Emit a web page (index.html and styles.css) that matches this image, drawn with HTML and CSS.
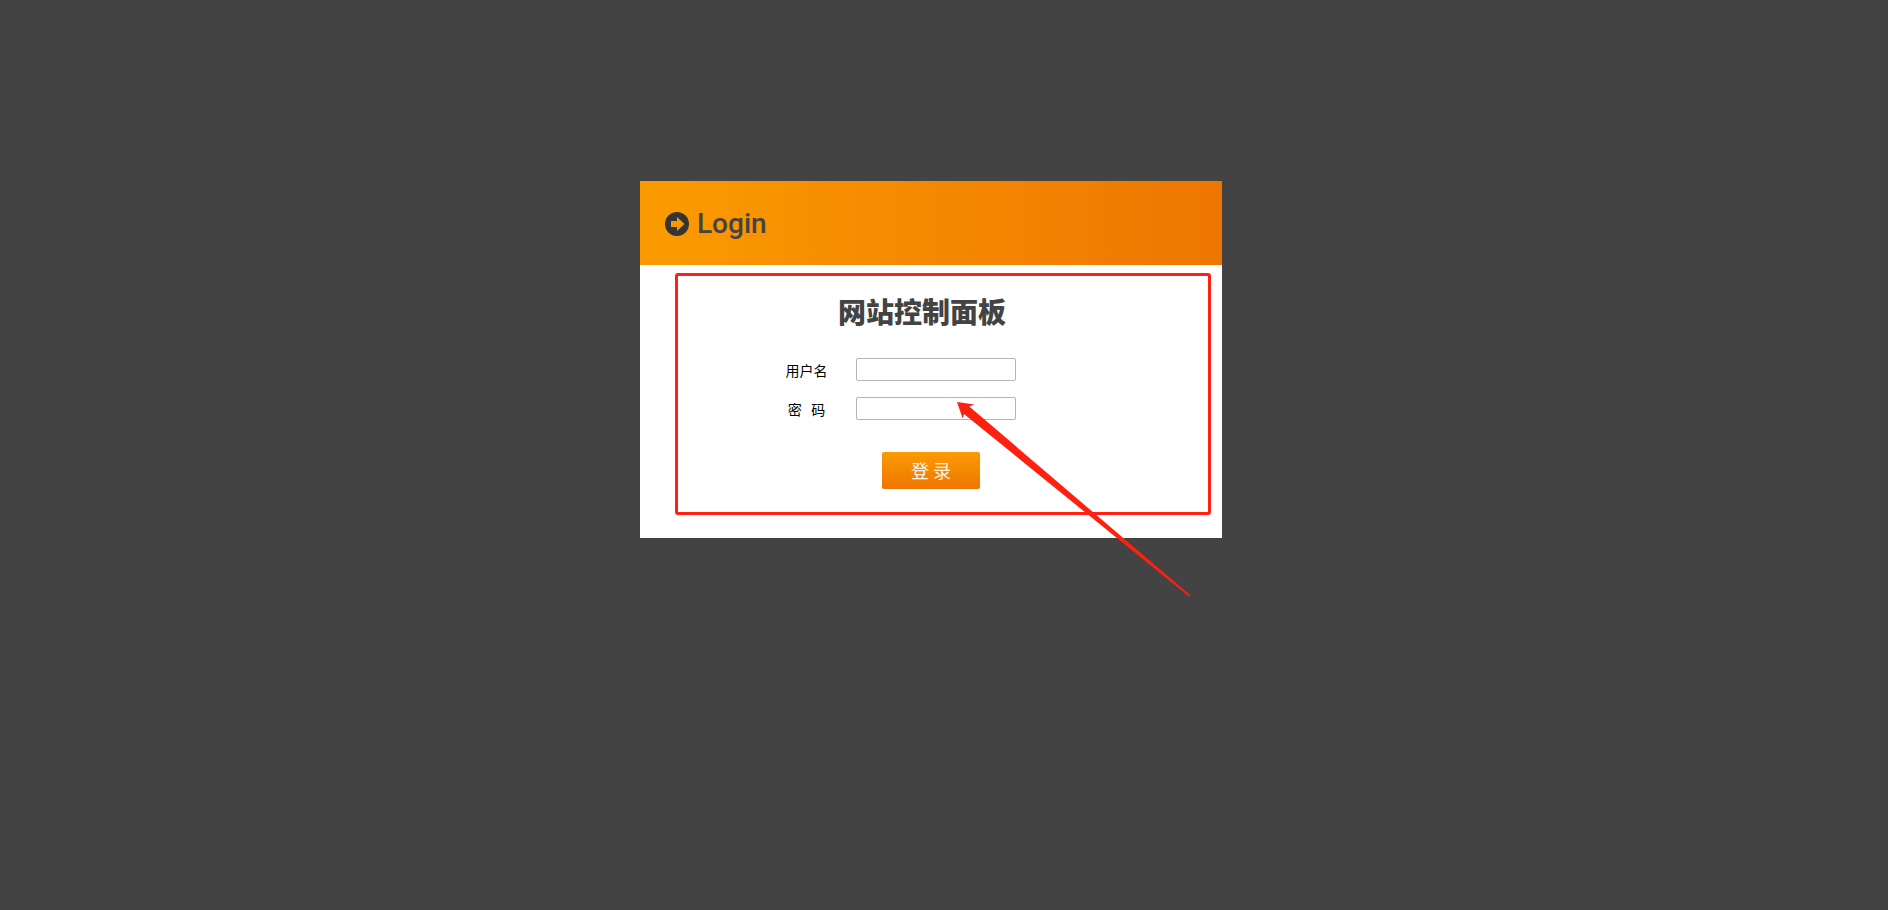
FILE: index.html
```html
<!DOCTYPE html>
<html lang="zh-CN">
<head>
<meta charset="utf-8">
<meta name="viewport" content="width=device-width, initial-scale=1">
<title>Login</title>
<link rel="stylesheet" href="styles.css">
</head>
<body>
<main class="card">
  <header class="card-header">
    <svg class="login-icon" viewBox="0 0 24 24" aria-hidden="true">
      <circle cx="12" cy="12" r="12" fill="#343434"/>
      <path d="M6 9H12V5L19.500 12 12 19V15H6Z" fill="#f99a02"/>
    </svg>
    <span class="login-label">Login</span>
  </header>
  <form class="panel">
    <h1 class="panel-title">网站控制面板</h1>
    <div class="field">
      <label class="field-label" for="username">用户名</label>
      <input class="field-input" id="username" name="username" type="text">
    </div>
    <div class="field">
      <label class="field-label" for="password">密&nbsp;&nbsp; 码</label>
      <input class="field-input" id="password" name="password" type="password">
    </div>
    <button class="submit" type="submit">登 录</button>
  </form>
  <svg class="pointer" viewBox="0 0 240 200" aria-hidden="true">
    <polygon points="0,0 17.5,2.5 12.3,4.5 233,193 232,194.5 7,12 5.7,16.5" fill="#ff2010"/>
  </svg>
</main>
</body>
</html>
```
FILE: styles.css
```css
* {
  box-sizing: border-box;
}

body {
  min-height: 100vh;
  margin: 0;
  padding: 181px 26px 80px 0;
  background: #434343;
  color: #000;
  font-family: "Noto Sans CJK SC", sans-serif;
  font-size: 14px;
}

.card {
  position: relative;
  width: 100%;
  max-width: 582px;
  margin: 0 auto;
  padding-bottom: 23px;
  background: #fff;
}

.card-header {
  display: flex;
  align-items: center;
  gap: 8px;
  padding: 27px 25px 25px;
  background: linear-gradient(to right, #fb9b00, #ee7600);
}

.login-icon {
  width: 24px;
  height: 24px;
}

.login-label {
  color: #434343;
  font-family: Roboto, sans-serif;
  font-size: 28px;
  font-weight: 500;
  line-height: 32px;
}

.panel {
  display: flex;
  flex-direction: column;
  align-items: center;
  gap: 16px;
  margin: 8px 11px 0 35px;
  padding: 17px 24px 23px 0;
  border: 3px solid #ff2010;
  border-radius: 3px;
}

.panel-title {
  margin: 0 18px 13px 0;
  color: #434343;
  font-size: 28px;
  font-weight: 900;
  line-height: 36px;
}

.field {
  display: flex;
  align-items: center;
  gap: 21px;
  margin-right: 68px;
}

.field-label {
  width: 56px;
  padding-top: 2px;
  line-height: 21px;
  text-align: center;
  white-space: nowrap;
}

.field-input {
  width: 160px;
  height: 23px;
  padding: 0 4px;
  border: 1px solid #b5b5b5;
  border-radius: 2px;
  background: #fff;
}

.submit {
  width: 98px;
  height: 37px;
  margin-top: 16px;
  padding: 0 0 2px;
  border: 0;
  border-radius: 2px;
  background: linear-gradient(#fb9b00, #ee7600);
  color: #fef4e9;
  font-family: inherit;
  font-size: 18px;
}

.pointer {
  position: absolute;
  top: 221px;
  left: 317px;
  width: 240px;
  height: 200px;
  pointer-events: none;
}
```
